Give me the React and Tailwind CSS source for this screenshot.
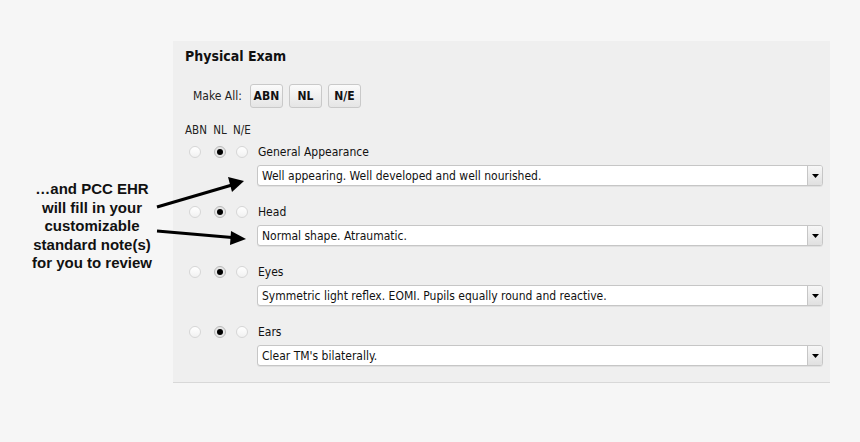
import React from 'react';

const ui = { fontFamily: '"DejaVu Sans Condensed", "DejaVu Sans", sans-serif' };

const exams = [
  { label: 'General Appearance', note: 'Well appearing. Well developed and well nourished.' },
  { label: 'Head', note: 'Normal shape. Atraumatic.' },
  { label: 'Eyes', note: 'Symmetric light reflex. EOMI. Pupils equally round and reactive.' },
  { label: 'Ears', note: "Clear TM's bilaterally." },
];

function Radio({ checked }) {
  return (
    <span
      className={`flex items-center justify-center w-[12px] h-[12px] rounded-full border ${
        checked ? 'border-[#b9b9b9] bg-[#e6e6e6]' : 'border-[#d6d6d6] bg-gradient-to-b from-white to-[#f1f1f1]'
      }`}
    >
      {checked && <span className="w-[6px] h-[6px] rounded-full bg-black" />}
    </span>
  );
}

function NoteSelect({ value }) {
  return (
    <div className="flex h-[21px] ml-[84px] mr-[7px] mt-[5px] rounded-[3px] border border-[#c6c6c6] bg-white shadow-[0_1px_0_rgba(0,0,0,0.06)] overflow-hidden">
      <div className="flex-1 flex items-center pl-[4px] text-[12px] text-[#111]">{value}</div>
      <div className="w-[15px] flex items-center justify-center border-l border-[#c6c6c6] bg-gradient-to-b from-[#f7f7f7] to-[#e0e0e0]">
        <svg width="7" height="4" viewBox="0 0 7 4">
          <path d="M0 0h7L3.5 4z" fill="#000" />
        </svg>
      </div>
    </div>
  );
}

function MakeAllButton({ children }) {
  return (
    <button className="h-[24px] w-[33px] rounded-[3px] border border-[#c9c9c9] bg-gradient-to-b from-[#fbfbfb] to-[#e5e5e5] text-[12px] font-bold text-[#111]">
      {children}
    </button>
  );
}

export default function App() {
  return (
    <div className="relative flex h-[442px] w-[860px] bg-[#f6f6f6] overflow-hidden">
      {/* Callout */}
      <div
        className="w-[173px] pl-[11px] pt-[180px] text-center text-[15px] font-bold leading-[18.5px] text-[#111]"
        style={{ fontFamily: '"Liberation Sans", Arial, sans-serif' }}
      >
        …and PCC EHR
        <br />
        will fill in your
        <br />
        customizable
        <br />
        standard note(s)
        <br />
        for you to review
      </div>

      {/* Physical exam panel */}
      <div className="self-start mt-[41px] w-[657px] bg-[#efefef] border-b border-[#d8d8d8] pt-[5px] pb-[16px]" style={ui}>
        <h2 className="pl-[12px] text-[14px] font-bold leading-[20px] text-[#111]">Physical Exam</h2>

        <div className="flex items-center gap-[6px] pl-[20px] mt-[18px]">
          <span className="text-[12px] text-[#222] mr-[2px]">Make All:</span>
          <MakeAllButton>ABN</MakeAllButton>
          <MakeAllButton>NL</MakeAllButton>
          <MakeAllButton>N/E</MakeAllButton>
        </div>

        <div className="flex pl-[12px] mt-[16px] h-[14px] items-center text-[11.5px] text-[#222]">
          <span className="w-[20px] text-center">ABN</span>
          <span className="w-[22px] ml-[4px] text-center">NL</span>
          <span className="w-[20px] ml-[1px] text-center">N/E</span>
        </div>

        <div className="mt-[6px] flex flex-col gap-[18px]">
          {exams.map((e) => (
            <div key={e.label}>
              <div className="flex h-[16px] items-center pl-[12px]">
                <span className="w-[20px] flex justify-center"><Radio /></span>
                <span className="w-[22px] ml-[4px] flex justify-center"><Radio checked /></span>
                <span className="w-[20px] ml-[1px] flex justify-center"><Radio /></span>
                <span className="ml-[6px] text-[12px] text-[#111]">{e.label}</span>
              </div>
              <NoteSelect value={e.note} />
            </div>
          ))}
        </div>
      </div>

      {/* Arrows */}
      <svg className="absolute left-0 top-0 pointer-events-none" width="860" height="442">
        <line x1="157" y1="207" x2="232" y2="185" stroke="#000" strokeWidth="3" />
        <path d="M244 181L228 177L232 192Z" fill="#000" />
        <line x1="157" y1="231" x2="232" y2="237.5" stroke="#000" strokeWidth="3" />
        <path d="M246 239L231 231L230 245Z" fill="#000" />
      </svg>
    </div>
  );
}
